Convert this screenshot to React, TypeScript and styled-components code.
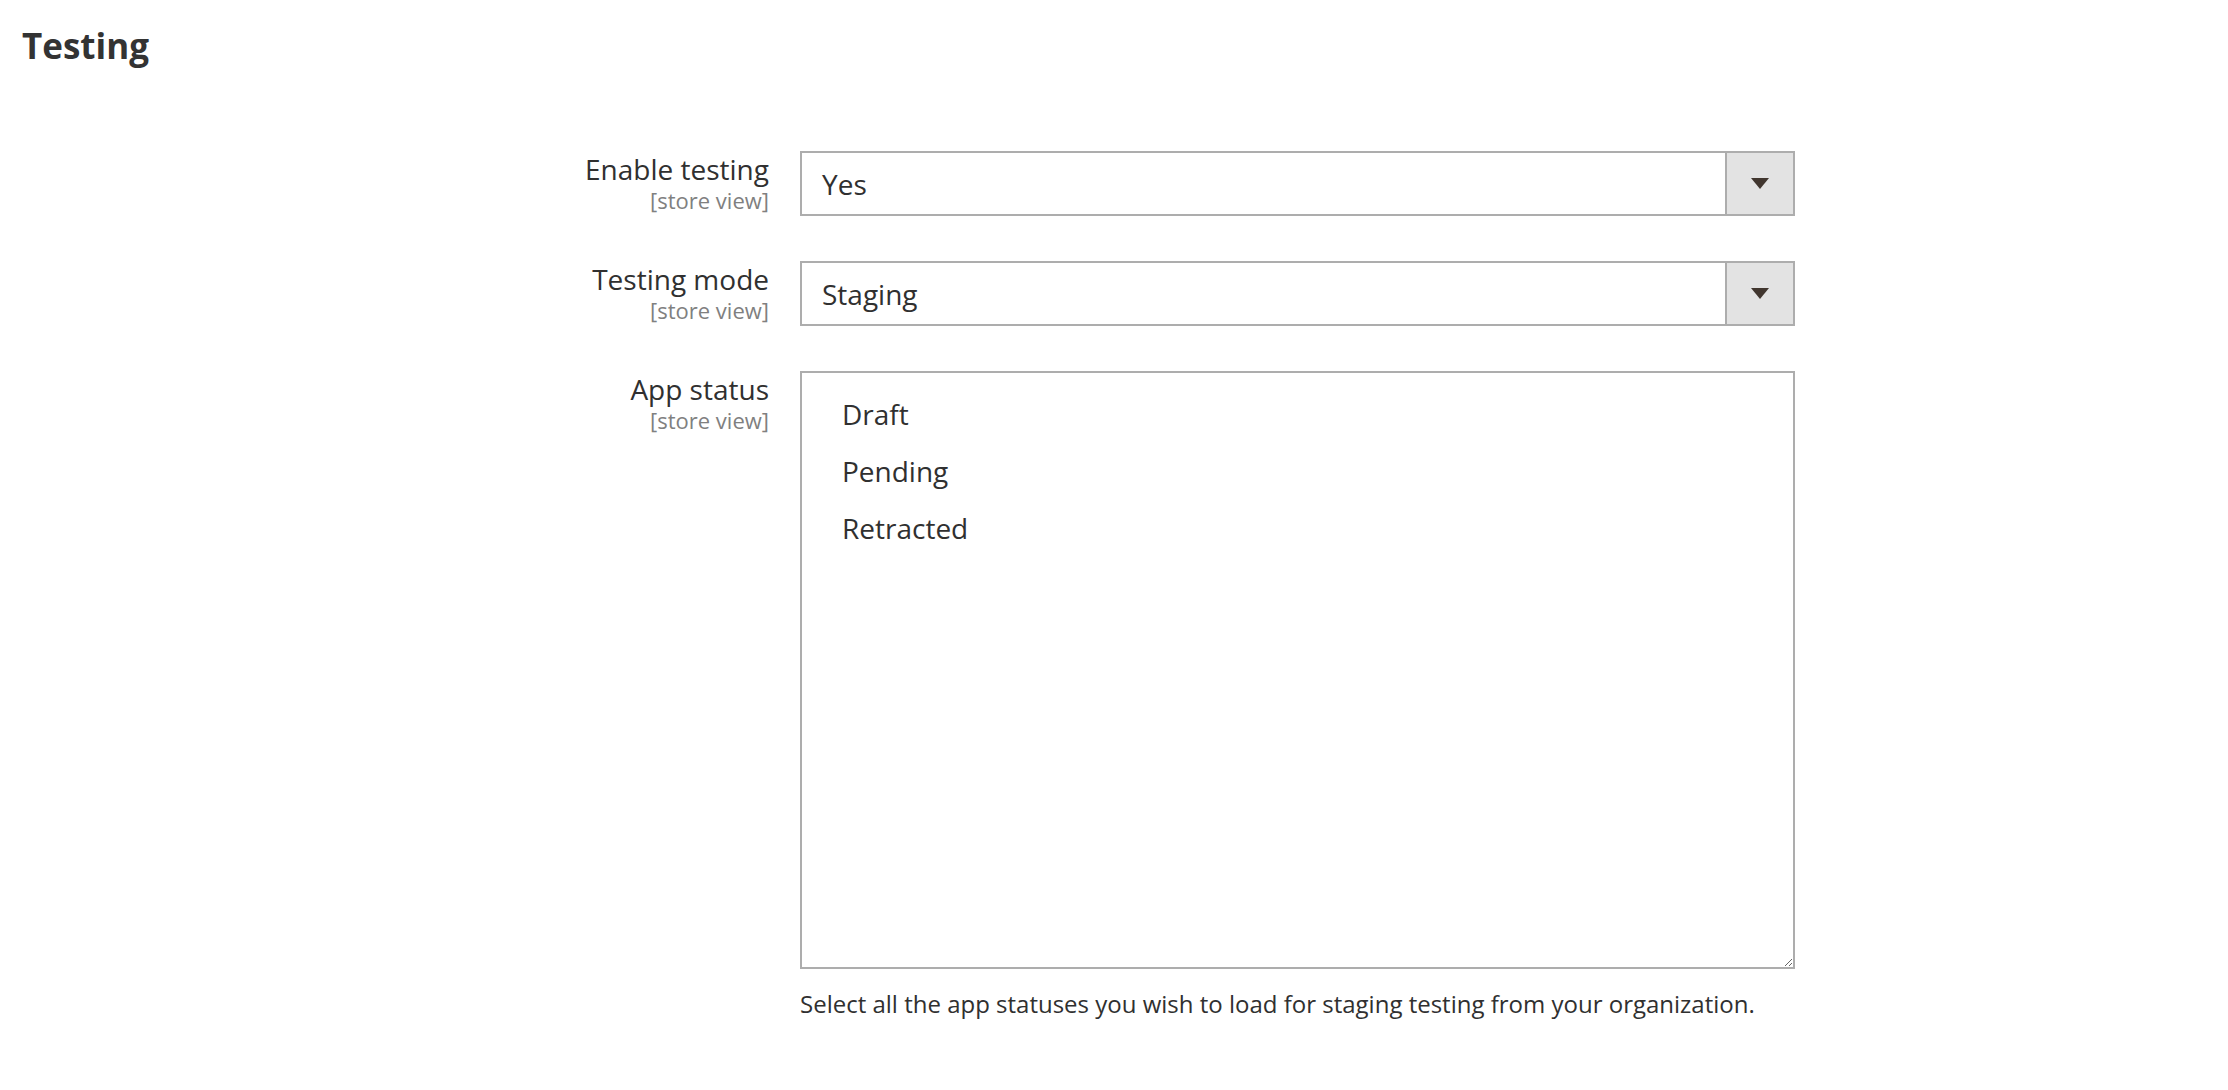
import React from "react";
import styled, { createGlobalStyle } from "styled-components";

const GlobalStyle = createGlobalStyle`
    html, body {
        margin: 0;
        padding: 0;
        background: #fff;
    }
    body {
        font-family: "Open Sans", "Liberation Sans", sans-serif;
        color: #303030;
    }
`;

const Page = styled.div`
    padding: 24px 0 0 22px;
`;

const Title = styled.h1`
    margin: 0;
    font-size: 35px;
    line-height: 44px;
    font-weight: 700;
    color: #333;
`;

const Form = styled.div`
    display: grid;
    grid-template-columns: 747px 995px;
    column-gap: 31px;
    row-gap: 45px;
    margin-top: 83px;
`;

const LabelCell = styled.div`
    text-align: right;
    padding-top: 1px;
`;

const Label = styled.div`
    font-size: 28px;
    line-height: 34px;
    color: #303030;
`;

const Scope = styled.div`
    font-size: 22px;
    line-height: 26px;
    margin-top: 1px;
    color: #808080;
`;

const Select = styled.div`
    display: flex;
    height: 65px;
    box-sizing: border-box;
    border: 2px solid #adadad;
    background: #fff;
`;

const SelectValue = styled.div`
    flex: 1;
    display: flex;
    align-items: center;
    padding-left: 20px;
    padding-top: 1px;
    font-size: 28px;
    color: #303030;
`;

const SelectButton = styled.div`
    width: 66px;
    border-left: 2px solid #adadad;
    background: #e3e3e3;
    display: flex;
    align-items: center;
    justify-content: center;
`;

const MultiBox = styled.div`
    height: 598px;
    box-sizing: border-box;
    border: 2px solid #adadad;
    padding: 13px 0 0 40px;
    overflow: auto;
    resize: vertical;
`;

const Option = styled.div`
    font-size: 28px;
    line-height: 57px;
    color: #303030;
`;

const Note = styled.div`
    margin-top: 18px;
    font-size: 24px;
    line-height: 34px;
    color: #303030;
`;

const Arrow = () => (
    <svg width="18" height="11" viewBox="0 0 18 11">
        <polygon points="0,0 18,0 9,11" fill="#41362f" />
    </svg>
);

const SelectRow = ({ label, value }: { label: string; value: string }) => (
    <>
        <LabelCell>
            <Label>{label}</Label>
            <Scope>[store view]</Scope>
        </LabelCell>
        <Select>
            <SelectValue>{value}</SelectValue>
            <SelectButton>
                <Arrow />
            </SelectButton>
        </Select>
    </>
);

const statuses = ["Draft", "Pending", "Retracted"];

const App = () => {
    return (
        <Page>
            <GlobalStyle />
            <Title>Testing</Title>
            <Form>
                <SelectRow label="Enable testing" value="Yes" />
                <SelectRow label="Testing mode" value="Staging" />
                <LabelCell>
                    <Label>App status</Label>
                    <Scope>[store view]</Scope>
                </LabelCell>
                <div>
                    <MultiBox>
                        {statuses.map((s) => (
                            <Option key={s}>{s}</Option>
                        ))}
                    </MultiBox>
                    <Note>
                        Select all the app statuses you wish to load for staging testing from your organization.
                    </Note>
                </div>
            </Form>
        </Page>
    );
};

export default App;
